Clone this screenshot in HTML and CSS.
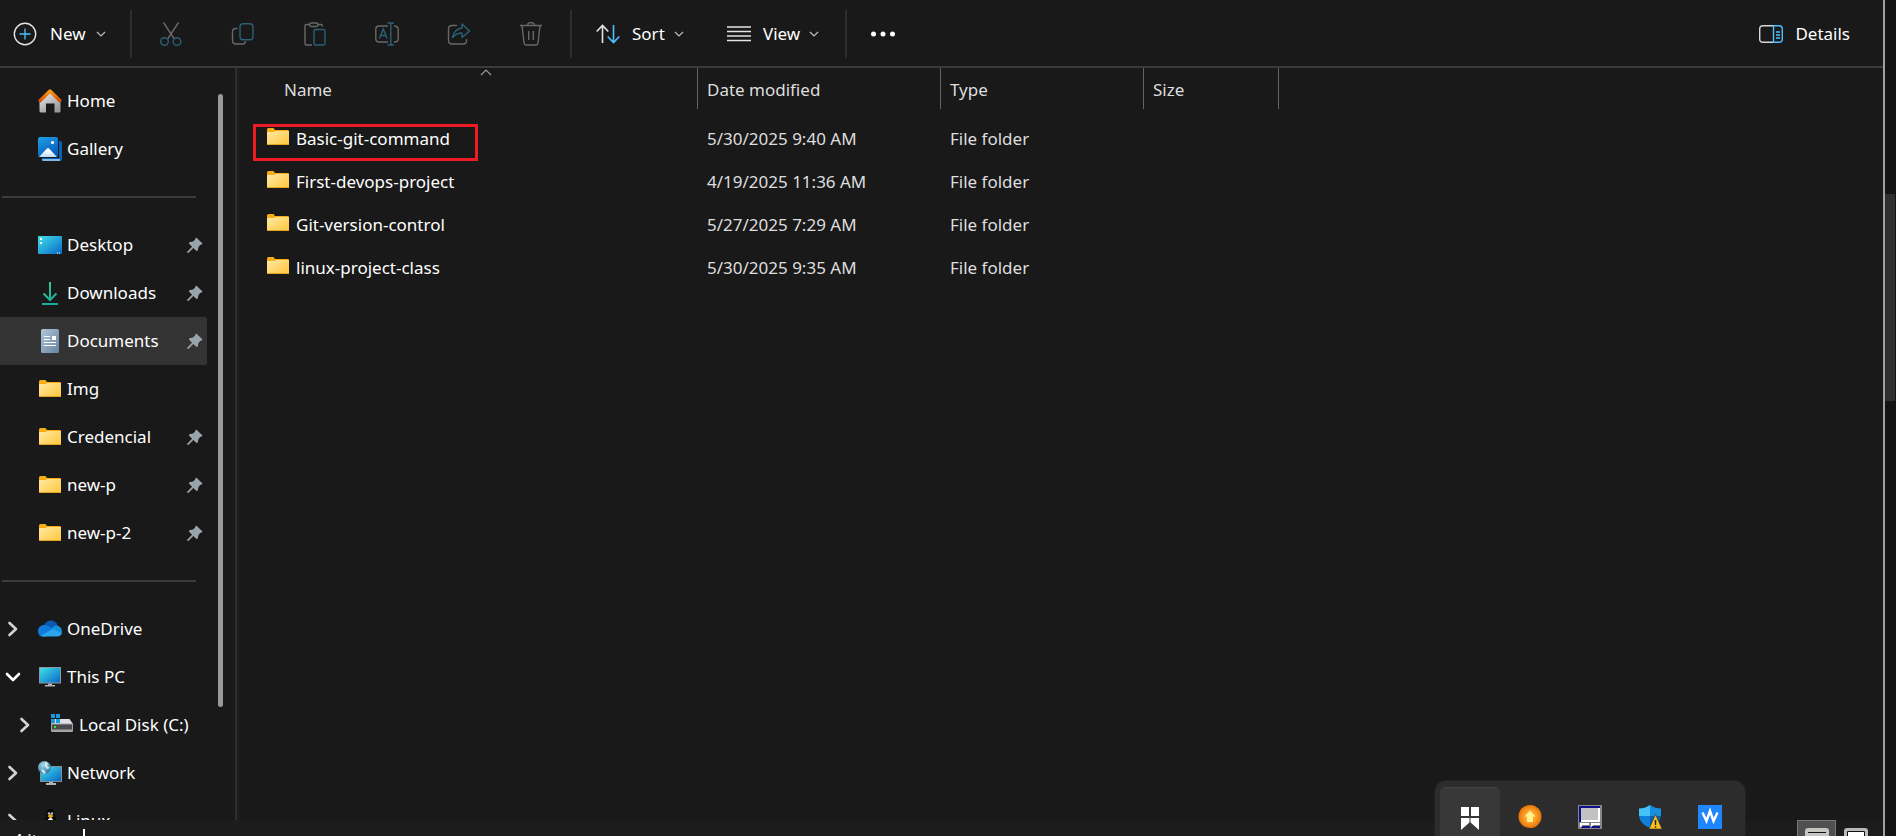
FILE: index.html
```html
<!DOCTYPE html>
<html lang="en">
<head>
<meta charset="utf-8">
<title>Documents</title>
<link rel="stylesheet" href="styles.css">
</head>
<body>
<svg class="defs" width="0" height="0" aria-hidden="true">
  <defs>
    <linearGradient id="gFolder" x1="0" y1="0" x2="1" y2="1"><stop offset="0" stop-color="#ffe9a6"/><stop offset="1" stop-color="#ffc63a"/></linearGradient>
    <linearGradient id="gScreen" x1="0" y1="0" x2="1" y2="1"><stop offset="0" stop-color="#3fe0e8"/><stop offset="1" stop-color="#0a68c8"/></linearGradient>
    <linearGradient id="gHome" x1="0" y1="0" x2="0.6" y2="1"><stop offset="0" stop-color="#f2f2f2"/><stop offset="1" stop-color="#9b9b9b"/></linearGradient>
    <linearGradient id="gRoof" x1="0" y1="0" x2="0" y2="1"><stop offset="0" stop-color="#fb9a0e"/><stop offset="1" stop-color="#d9480a"/></linearGradient>
    <linearGradient id="gPhoto" x1="0" y1="0" x2="0.5" y2="1"><stop offset="0" stop-color="#1ea2e8"/><stop offset="1" stop-color="#0a5dbb"/></linearGradient>
    <linearGradient id="gSnow" x1="0" y1="0" x2="0" y2="1"><stop offset="0.3" stop-color="#fff"/><stop offset="1" stop-color="#b9dcf8"/></linearGradient>
    <linearGradient id="gDown" gradientUnits="userSpaceOnUse" x1="4" y1="1" x2="20" y2="23"><stop offset="0" stop-color="#3bd08c"/><stop offset="1" stop-color="#12a5a0"/></linearGradient>
    <linearGradient id="gDoc" x1="0" y1="0" x2="1" y2="1"><stop offset="0" stop-color="#b4c6da"/><stop offset="1" stop-color="#64839f"/></linearGradient>
    <radialGradient id="gGlobe" cx="0.4" cy="0.3" r="0.8"><stop offset="0" stop-color="#a9dcec"/><stop offset="1" stop-color="#1d6c93"/></radialGradient>
    <radialGradient id="gOrb"><stop offset="0" stop-color="#ffbc45"/><stop offset="0.6" stop-color="#fb9a24"/><stop offset="1" stop-color="#e57408"/></radialGradient>
    <symbol id="folder" viewBox="0 0 24 24">
      <path d="M1 4.500Q1 3 2.500 3h5l1.500 2h12.500q1.500 0 1.500 1v4H1z" fill="#f6ac13"/>
      <path d="M1 8q0-1 1-1h5.500L10 6h13v12.500q0 1.500-1 1.500H2q-1 0-1-1z" fill="url(#gFolder)"/>
      <path d="M1 19.500h22" stroke="#e6a520"/>
    </symbol>
    <symbol id="pin" viewBox="0 0 16 16"><path d="M9.600.8 15.300 6.300 14.900 7.500 13.100 8 11.400 10.300 10.800 13.600 9.500 14 6.300 11 1.400 15.900.3 15.800.2 14.700 5 9.700 1.900 6.500 2.300 5.300 6 4.500 8 2.700 8.500 1z" fill="#98a4ac"/></symbol>
    <symbol id="right" viewBox="0 0 16 16"><path d="M4.500 2 11 8l-6.500 6" fill="none" stroke="#d4d4d4" stroke-width="2.600" stroke-linecap="round" stroke-linejoin="round"/></symbol>
    <symbol id="down" viewBox="0 0 16 16"><path d="M2 5l6 6 6-6" fill="none" stroke="#fff" stroke-width="2.600" stroke-linecap="round" stroke-linejoin="round"/></symbol>
    <symbol id="drop" viewBox="0 0 10 10"><path d="M1 3l4 4 4-4" fill="none" stroke="#bdbdbd" stroke-width="1.200"/></symbol>
  </defs>
</svg>

<div class="desktop">
<div class="window">
  <header class="toolbar">
    <button class="tool tool-new"><svg width="24" height="24" viewBox="0 0 24 24" fill="none"><circle cx="12" cy="12" r="10.700" stroke="#e4e4e4" stroke-width="1.400"/><path d="M12 6.500v11M6.500 12h11" stroke="#4cc2ff" stroke-width="1.300"/></svg><span>New</span><svg width="10" height="10"><use href="#drop"/></svg></button>
    <span class="rule"></span>
    <div class="commands">
      <button aria-label="Cut" disabled><svg width="24" height="24" viewBox="0 0 24 24" fill="none" stroke-width="1.400"><path d="M4.500 0.500 15 16.500M19.500 0.500 9 16.500" stroke="#686868"/><circle cx="5.500" cy="19.500" r="3.800" stroke="#2a6078"/><circle cx="18" cy="19.500" r="3.800" stroke="#2a6078"/></svg></button>
      <button aria-label="Copy" disabled><svg width="24" height="24" viewBox="0 0 24 24" fill="none" stroke-width="1.400"><path d="M6.500 6.500H5Q1.500 6.500 1.500 10v8.500Q1.500 22 5 22h6.500q3 0 3-3" stroke="#686868"/><rect x="9" y="1.700" width="13" height="16" rx="3.200" stroke="#2a6078"/></svg></button>
      <button aria-label="Paste" disabled><svg width="24" height="24" viewBox="0 0 24 24" fill="none" stroke-width="1.400"><path d="M7 2.500H3.500Q2 2.500 2 4v17.500q0 1.500 1.500 1.500H9M14.500 2.500H18q1.500 0 1.500 2" stroke="#686868"/><rect x="6.500" y="1" width="8.500" height="3.500" rx="1.700" stroke="#686868"/><rect x="11" y="7.500" width="11" height="15.500" rx="1.500" stroke="#2a6078"/></svg></button>
      <button aria-label="Rename" disabled><svg width="24" height="24" viewBox="0 0 24 24" fill="none" stroke-width="1.400"><path d="M13 4H4Q.8 4 .8 7.200v9.600Q.8 20 4 20h9M19 4q4.200 0 4.200 3.200v9.600q0 3.200-4.200 3.200" stroke="#686868"/><path d="M12.500 1H19M12.500 23H19M15.800 1v22M4.500 16.500 8.300 7l3.800 9.500M5.700 13.500h5.200" stroke="#2a6078"/></svg></button>
      <button aria-label="Share" disabled><svg width="24" height="24" viewBox="0 0 24 24" fill="none" stroke-width="1.400" stroke-linejoin="round"><path d="M10 3.500H5Q1.500 3.500 1.500 7v11.500Q1.500 22 5 22h11q3.500 0 3.500-3.500V17" stroke="#686868"/><path d="M15 2v4Q7 7 5.500 15.500q4-4.500 9.500-4.500v4.500L22.500 9z" stroke="#2a6078"/></svg></button>
      <button aria-label="Delete" disabled><svg width="24" height="24" viewBox="0 0 24 24" fill="none" stroke="#686868" stroke-width="1.400"><path d="M1 3.500h22M3 3.500l2 17.500q.3 2 2 2h10q1.700 0 2-2l2-17.500M8.500 3.500q0-3 3.500-3t3.500 3M9.700 9v9M14.300 9v9"/></svg></button>
    </div>
    <span class="rule"></span>
    <button class="tool tool-sort"><svg width="24" height="24" viewBox="0 0 24 24" fill="none" stroke-width="1.600"><path d="M6.500 21V4M.7 9.500l5.800-6 5.800 6" stroke="#e4e4e4"/><path d="M17.500 3v17M11.700 14.500l5.800 6 5.800-6" stroke="#4cc2ff"/></svg><span>Sort</span><svg width="10" height="10"><use href="#drop"/></svg></button>
    <button class="tool tool-view"><svg width="24" height="24" viewBox="0 0 24 24" stroke="#e4e4e4" stroke-width="1.300"><path d="M0 5h24M0 9.500h24M0 14h24M0 18.500h24"/></svg><span>View</span><svg width="10" height="10"><use href="#drop"/></svg></button>
    <span class="rule"></span>
    <button class="tool tool-more" aria-label="See more"><svg width="24" height="24" viewBox="0 0 24 24" fill="#fff"><circle cx="2.500" cy="12" r="2.500"/><circle cx="12" cy="12" r="2.500"/><circle cx="21.500" cy="12" r="2.500"/></svg></button>
    <button class="tool tool-details"><svg width="24" height="24" viewBox="0 0 24 24" fill="none" stroke-width="1.400"><path d="M14 3.700H4Q.7 3.700.7 7v10q0 3.300 3.300 3.300h10" stroke="#d8d8d8"/><path d="M14.500 3.700h5.500q3.300 0 3.300 3.300v10q0 3.300-3.300 3.300h-5.500zM17 10h4M17 13h4M17 16h4" stroke="#4cc2ff"/></svg><span>Details</span></button>
  </header>

  <main class="content">
    <nav class="sidebar" aria-label="Navigation pane">
      <ul class="tree">
        <li><a href="#"><svg width="24" height="24" viewBox="0 0 24 24"><path d="M1.500 12 12 2l10.500 10v10q0 1.500-1.500 1.500h-4.500v-9h-8.500v9H3q-1.500 0-1.500-1.500z" fill="url(#gHome)"/><path d="M1.200 12.500 12 2l10.800 10.500" fill="none" stroke="url(#gRoof)" stroke-width="3.200" stroke-linejoin="round"/></svg><span>Home</span></a></li>
        <li><a href="#"><svg width="24" height="24" viewBox="0 0 24 24"><rect x="4" y="4" width="20" height="20" rx="2" fill="#0863b8"/><path d="M4 22h18v2H5q-1 0-1-2z" fill="#83b6ea"/><rect x="-1" y="-1" width="22" height="22" fill="#191919"/><rect width="20" height="20" rx="2" fill="url(#gPhoto)"/><path d="m1 20 8-8.500q1-1 2 0L19 20z" fill="url(#gSnow)"/><circle cx="14.500" cy="5.500" r="1.600" fill="#fff"/></svg><span>Gallery</span></a></li>
        <li class="split"></li>
        <li><a href="#"><svg width="24" height="24" viewBox="0 0 24 24"><rect y="3" width="24" height="18" rx="1" fill="url(#gScreen)"/><path d="M2 5h2v2H2zM2 9h2v2H2z" fill="#fff"/><path d="M19 20h1M21 20h1" stroke="#fff"/></svg><span>Desktop</span></a><svg class="pin" width="16" height="16"><use href="#pin"/></svg></li>
        <li><a href="#"><svg width="24" height="24" viewBox="0 0 24 24" fill="none" stroke="url(#gDown)" stroke-width="2"><path d="M5.500 12.500 12 19l6.500-6.500M4 23h16M12 1v17"/></svg><span>Downloads</span></a><svg class="pin" width="16" height="16"><use href="#pin"/></svg></li>
        <li class="selected"><a href="#" aria-current="true"><svg width="24" height="24" viewBox="0 0 24 24"><rect x="3" width="18" height="24" rx="1.500" fill="url(#gDoc)"/><path d="M6 7.500h6M6 10.500h6M6 13.500h12M6 16.500h12" stroke="#fff" stroke-width="1.200"/><path d="M14 7h4v4h-4z" fill="#fff"/></svg><span>Documents</span></a><svg class="pin" width="16" height="16"><use href="#pin"/></svg></li>
        <li><a href="#"><svg width="24" height="24"><use href="#folder"/></svg><span>Img</span></a></li>
        <li><a href="#"><svg width="24" height="24"><use href="#folder"/></svg><span>Credencial</span></a><svg class="pin" width="16" height="16"><use href="#pin"/></svg></li>
        <li><a href="#"><svg width="24" height="24"><use href="#folder"/></svg><span>new-p</span></a><svg class="pin" width="16" height="16"><use href="#pin"/></svg></li>
        <li><a href="#"><svg width="24" height="24"><use href="#folder"/></svg><span>new-p-2</span></a><svg class="pin" width="16" height="16"><use href="#pin"/></svg></li>
        <li class="split"></li>
        <li><button class="expand" aria-label="Expand OneDrive"><svg width="16" height="16"><use href="#right"/></svg></button><a href="#"><svg width="24" height="24" viewBox="0 0 24 24"><path d="M6 8.500Q8 3.500 13 3.500q5 0 7 5.500l-6 5z" fill="#0a5ab4"/><path d="M5 19.500Q0 19.500 0 14 .3 8.500 6 8q3 0 5 1.500l7 4-10 6z" fill="#0f7cdb"/><path d="m13.500 11 4-2.500q6 0 6.500 6 0 2-1 3.500z" fill="#1590e0"/><path d="M3 18.500 15 12l8.500 4.500q-1 3-4.500 3H5q-1.500 0-2-1z" fill="#2ba6ee"/></svg><span>OneDrive</span></a></li>
        <li><button class="expand" aria-label="Collapse This PC"><svg width="16" height="16"><use href="#down"/></svg></button><a href="#"><svg width="24" height="24" viewBox="0 0 24 24"><path d="M1 2h22v16.500H1z" fill="#8b989e"/><path d="M2 3h20v14.500H2z" fill="url(#gScreen)"/><path d="M10 18.500h4v1.500h3v1.500H7V20h3z" fill="#aeb6ba"/></svg><span>This PC</span></a></li>
        <li class="nested"><button class="expand" aria-label="Expand Local Disk"><svg width="16" height="16"><use href="#right"/></svg></button><a href="#"><svg width="24" height="24" viewBox="0 0 24 24"><path d="M5 6h14.500l3.500 5H1z" fill="#dfe1e4"/><rect x="1" y="10.500" width="22" height="8.500" rx="1" fill="#a2a4a6"/><path d="M2 11.500h20v5H2z" fill="#4a4b4d"/><path d="M4 13h2v2H4z" fill="#3be03b"/><path d="M1 1h4v4H1zM6 1h4v4H6zM1 6h4v4H1zM6 6h4v4H6z" fill="#1b98e0"/></svg><span>Local Disk (C:)</span></a></li>
        <li><button class="expand" aria-label="Expand Network"><svg width="16" height="16"><use href="#right"/></svg></button><a href="#"><svg width="24" height="24" viewBox="0 0 24 24"><path d="M2 5h22v16H2z" fill="#83929a"/><path d="M3 6h20v14H3z" fill="url(#gScreen)"/><path d="M11 21h4v1h3v2H8v-2h3z" fill="#aeb6ba"/><circle cx="6.500" cy="6.500" r="6.500" fill="url(#gGlobe)"/><path d="m3 8 3 1 2 3-2 1-2-2zM7 1l3 1-1 3 3 2-3 1-2-3z" fill="#e6f6fb" opacity=".85"/></svg><span>Network</span></a></li>
        <li><button class="expand" aria-label="Expand Linux"><svg width="16" height="16"><use href="#right"/></svg></button><a href="#"><svg width="24" height="24" viewBox="0 0 24 24"><path d="M12.500 0q-4 0-4 5 0 3-2 6t-2 8q0 3 4 4h8q4-1 4-4 0-5-2-8t-2-6q0-5-4-5z" fill="#050505"/><path d="M12.500 8.500q-3 1-4 6t4 7q5-2 4-7t-4-6z" fill="#f4f4f4"/><circle cx="11" cy="4.500" r="1.300" fill="#b9b9b9"/><circle cx="14" cy="4.500" r="1.300" fill="#b9b9b9"/><path d="m9.500 7 3-2 3 2-3 2.500z" fill="#e8b01c"/></svg><span>Linux</span></a></li>
      </ul>
      <div class="scroll"><span></span></div>
    </nav>

    <section class="files">
      <svg class="sorted" width="12" height="8" viewBox="0 0 12 8" fill="none" stroke="#9b9b9b" stroke-width="1.200"><path d="m1 7 5-5 5 5"/></svg>
      <table>
        <colgroup><col class="c-name"><col class="c-date"><col class="c-type"><col class="c-size"></colgroup>
        <thead><tr><th><span>Name</span></th><th><span>Date modified</span></th><th><span>Type</span></th><th><span>Size</span></th></tr></thead>
        <tbody>
          <tr><td class="marked"><div><svg width="24" height="24"><use href="#folder"/></svg><span>Basic-git-command</span></div></td><td>5/30/2025 9:40 AM</td><td>File folder</td><td></td></tr>
          <tr><td><div><svg width="24" height="24"><use href="#folder"/></svg><span>First-devops-project</span></div></td><td>4/19/2025 11:36 AM</td><td>File folder</td><td></td></tr>
          <tr><td><div><svg width="24" height="24"><use href="#folder"/></svg><span>Git-version-control</span></div></td><td>5/27/2025 7:29 AM</td><td>File folder</td><td></td></tr>
          <tr><td><div><svg width="24" height="24"><use href="#folder"/></svg><span>linux-project-class</span></div></td><td>5/30/2025 9:35 AM</td><td>File folder</td><td></td></tr>
        </tbody>
      </table>
    </section>
  </main>

  <footer class="status">
    <span class="count">4 items</span><span class="bar"></span>
    <div class="modes">
      <button class="on" aria-label="Details view"><svg width="24" height="24" viewBox="0 0 24 24"><rect width="24" height="24" rx="3" fill="#c4c4c0"/><path d="M3 4.500h18M3 10h18" stroke="#111" stroke-width="1.200"/></svg></button>
      <button aria-label="Large icons view"><svg width="24" height="24" viewBox="0 0 24 24"><rect width="24" height="24" rx="3" fill="#b9b9b9"/><path d="M3.500 3.500h17V21h-17z" fill="#fff" stroke="#111"/></svg></button>
    </div>
  </footer>
</div>
<aside class="behind"><span></span></aside>
</div>

<div class="tray">
  <button class="active" aria-label="Bookmarks"><svg width="24" height="24" viewBox="0 0 24 24" fill="#fff"><path d="M3 1h8v9H3zM13 1h8v9h-8zM3 12h18v12l-9-8-9 8z"/><path d="M12 12v5" stroke="#383838" stroke-width="1"/></svg></button>
  <button aria-label="Updates"><svg width="24" height="24" viewBox="0 0 24 24"><circle cx="12" cy="11.500" r="11.500" fill="url(#gOrb)"/><path d="m12 5.500 5.500 6H15V17H9v-5.500H6.500z" fill="#fff38e"/></svg></button>
  <button aria-label="Display"><svg width="24" height="24" viewBox="0 0 24 24"><path d="M0 0h24v24H0z" fill="#858585"/><path d="M1 1h21v16H1z" fill="#10108a"/><path d="M3 3h19v14H3z" fill="#fff"/><path d="M3 3h17v12H3z" fill="#c2c2c2"/><path d="M2 18h9v2H4v2H2zM13 18h9v2h-7v2h-2z" fill="#fff"/><path d="M4 21h8v2H3zM14 21h8v2h-9z" fill="#10108a"/></svg></button>
  <button aria-label="Security"><svg width="24" height="24" viewBox="0 0 24 24"><path d="M12 0q5 3.500 11 3.500V11H12z" fill="#1a8fe0"/><path d="M12 0Q7 3.500 1 3.500V11h11z" fill="#45c2f5"/><path d="M1 11h11v12Q2 19 1 11z" fill="#0f80d8"/><path d="M12 11h11q-1 8-11 12z" fill="#0a5cb4"/><path d="M17.500 9.500 24 24H11z" fill="#fcc21b" stroke="#2b2b2b" stroke-width=".6"/><path d="M17.500 15v5M17.500 21.200v1.500" stroke="#222" stroke-width="1.500"/></svg></button>
  <button aria-label="Wave"><svg width="24" height="24" viewBox="0 0 24 24"><path d="M0 0h24v24H0z" fill="#1f86ff"/><path d="m4.500 7.500 4 8.500 3.500-10 3.500 10 4-8.500" fill="none" stroke="#fff" stroke-width="2.400"/></svg></button>
</div>
</body>
</html>
```
FILE: styles.css
```css
*, *::before, *::after { box-sizing: border-box; }

body {
  margin: 0;
  height: 100vh;
  overflow: hidden;
  background: #191919;
  color: #fff;
  font: 17px/24px "Noto Sans", "Open Sans", sans-serif;
}

button {
  display: flex;
  align-items: center;
  padding: 0;
  border: 0;
  background: none;
  color: inherit;
  font: inherit;
}

a { color: inherit; text-decoration: none; }
svg { display: block; flex: none; }
.defs { position: absolute; }

.desktop { display: flex; height: 100%; }

.window {
  flex: 1;
  min-width: 0;
  display: flex;
  flex-direction: column;
  border-right: 2px solid #a0a0a0;
}

.behind { width: 11px; padding: 194px 1px 0 0; background: #141414; }
.behind span { display: block; height: 207px; background: #2f2f2f; }

/* Command bar */
.toolbar {
  flex: none;
  display: flex;
  align-items: center;
  height: 68px;
  padding: 2px 33px 0 13px;
  border-bottom: 2px solid #3b3b3b;
}

.tool { gap: 12px; height: 48px; }
.tool svg + span + svg { margin-left: -3px; }
.tool-new { width: 117px; gap: 13px; }
.tool-sort { margin-left: 24px; width: 131px; }
.tool-view { width: 118px; }
.tool-more { margin-left: 24px; }
.tool-details { margin-left: auto; }
.rule { width: 2px; height: 48px; background: #2d2d2d; }
.commands { display: flex; padding: 0 3px; }
.commands button { width: 72px; height: 48px; justify-content: center; }

/* Panes */
.content { flex: 1; min-height: 0; display: flex; }

.sidebar {
  flex: none;
  display: flex;
  width: 239px;
  overflow: hidden;
  border-right: 2px solid #1f1f1f;
}

.tree {
  width: 207px;
  margin: 0;
  padding: 9px 0 0;
  list-style: none;
}

.tree li {
  display: flex;
  align-items: center;
  height: 48px;
  padding: 0 4px 0 38px;
}

.tree a { flex: 1; display: flex; align-items: center; gap: 5px; white-space: nowrap; }
.tree .selected { background: #333; border-radius: 0 2px 2px 0; }
.tree .split { padding: 0 11px 0 2px; }
.tree .split::before { content: ""; flex: 1; height: 2px; background: #3b3b3b; }
.tree .expand { width: 38px; height: 48px; margin-left: -38px; padding-left: 5px; }
.tree .nested { padding-left: 50px; }

.scroll { flex: 1; padding: 26px 0 0 11px; border-right: 2px solid #2d2d2d; }
.scroll span { display: block; width: 5px; height: 613px; border-radius: 3px; background: #999; }

.files { position: relative; flex: 1; min-width: 0; }
.sorted { position: absolute; left: 241px; top: 0; }

table { border-collapse: collapse; table-layout: fixed; width: 1040px; }
.c-name { width: 459px; }
.c-date { width: 243px; }
.c-type { width: 203px; }
.c-size { width: 135px; }

th { padding: 0 0 8px; font-weight: 400; text-align: left; color: #dedede; }
th span { display: block; padding: 10px 0 7px 9px; border-right: 1px solid #636363; }
th:first-child span { padding-left: 45px; }

td { height: 43px; padding: 0 0 0 9px; color: #dedede; }
td:first-child { padding-left: 27px; color: #fff; }
td div { display: flex; align-items: center; gap: 6px; }
td svg { margin-bottom: 4px; }

.marked { position: relative; }
.marked::after {
  content: "";
  position: absolute;
  left: 14px;
  top: 7px;
  width: 225px;
  height: 37px;
  border: 3px solid #ed1c24;
}

/* Status bar */
.status {
  flex: none;
  display: flex;
  height: 16px;
  padding-left: 13px;
  overflow: hidden;
  background: #1c1c1c;
}

.count { width: 70px; padding-top: 8px; }
.bar { width: 2px; height: 24px; margin-top: 9px; background: #fff; }
.modes { display: flex; margin-left: auto; padding-right: 8px; }
.modes button { width: 39px; height: 39px; justify-content: center; }
.modes .on { border: 1px solid #777; background: #505050; }

/* Hidden-icons flyout */
.tray {
  position: absolute;
  right: 150px;
  bottom: 0;
  display: flex;
  height: 56px;
  padding: 6px 5px 0;
  border: 1px solid #222;
  border-bottom: 0;
  border-radius: 12px 12px 0 0;
  background: #2c2c2c;
  overflow: hidden;
}

.tray button { width: 60px; height: 60px; justify-content: center; }
.tray .active { border-radius: 6px; border-top: 1px solid #444; background: #383838; }
```
